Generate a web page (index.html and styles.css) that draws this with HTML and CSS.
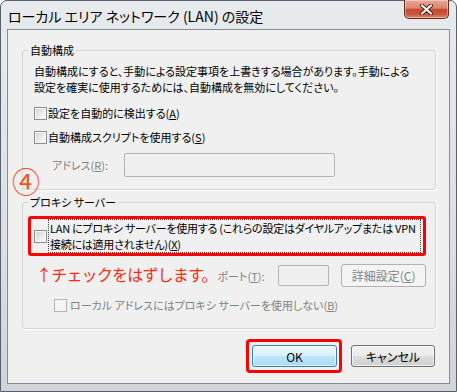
FILE: index.html
```html
<!DOCTYPE html>
<html>
    <head>
        <title>ローカル エリア ネットワーク (LAN) の設定</title>
        <link rel="stylesheet" href="styles.css">
    </head>
<body>
    <div class="window">
        <div class="titlebar">
            <span class="title">ローカル エリア ネットワーク (LAN) の設定</span>
            <span class="close-btn">
                <svg width="13" height="11" viewBox="0 0 13 11">
                    <path d="M2 1.5 L11 9.5 M11 1.5 L2 9.5" stroke="#4a1a12" stroke-width="4" stroke-linecap="round"/>
                    <path d="M2 1.5 L11 9.5 M11 1.5 L2 9.5" stroke="#fff" stroke-width="2.2" stroke-linecap="round"/>
                </svg>
            </span>
        </div>

        <div class="client">
            <span class="note-num">④</span>

            <fieldset class="group group-auto">
                <legend>自動構成</legend>
                <p class="desc">自動構成にすると、手動による設定事項を上書きする場合があります。手動による<br>設定を確実に使用するためには、自動構成を無効にしてください。</p>
                <div class="check check-first"><span class="box"></span>設定を自動的に検出する(<u>A</u>)</div>
                <div class="check"><span class="box"></span>自動構成スクリプトを使用する(<u>S</u>)</div>
                <div class="field-row">
                    <span class="field-label script-label">アドレス(<u>R</u>):</span>
                    <span class="textbox script-box"></span>
                </div>
            </fieldset>

            <fieldset class="group group-proxy">
                <legend>プロキシ サーバー</legend>
                <div class="mark-box">
                    <span class="box"></span>
                    <span class="focus-label">LAN にプロキシ サーバーを使用する (これらの設定はダイヤルアップまたは VPN<br>接続には適用されません)(<u>X</u>)</span>
                </div>
                <div class="proxy-row">
                    <span class="field-label addr-label">アドレス(<u>E</u>):</span>
                    <span class="textbox addr-box"></span>
                    <span class="field-label port-label">ポート(<u>T</u>):</span>
                    <span class="textbox port-box"></span>
                    <span class="btn btn-disabled">詳細設定(<u>C</u>)</span>
                </div>
                <div class="check check-local"><span class="box box-disabled"></span>ローカル アドレスにはプロキシ サーバーを使用しない(<u>B</u>)</div>
            </fieldset>

            <span class="note-text">↑チェックをはずします。</span>

            <div class="buttons">
                <span class="mark-btn"><span class="btn btn-default">OK</span></span>
                <span class="btn btn-cancel">キャンセル</span>
            </div>
        </div>
    </div>
</body>
</html>
```

FILE: styles.css
```css
* {
    box-sizing: border-box;
}

body {
    margin: 0;
    font-family: "Noto Sans CJK JP", sans-serif;
    font-size: 11px;
    font-feature-settings: "palt";
    color: #000;
}

.window {
    width: 457px;
    height: 392px;
    border: 1px solid #59626c;
    border-radius: 7px 7px 0 0;
    background: linear-gradient(180deg, #e8ebee 0%, #dcdfe3 60%, #d0d4d9 100%);
    padding: 0 6px 7px 6px;
    display: flex;
    flex-direction: column;
}

.titlebar {
    height: 28px;
    display: flex;
    justify-content: space-between;
    align-items: flex-start;
}

.title {
    font-size: 14px;
    line-height: 16px;
    margin-top: 7px;
    padding-left: 1px;
}

.close-btn {
    width: 45px;
    height: 19px;
    margin: -1px 1px 0 0;
    border: 1px solid #6b2b1f;
    border-top: none;
    border-radius: 0 0 5px 5px;
    background: linear-gradient(180deg, #eaa898 0%, #dc8671 45%, #c54a31 52%, #c9553a 78%, #de8c6c 100%);
    box-shadow: inset 0 0 0 1px rgba(255, 255, 255, 0.35);
    display: flex;
    align-items: center;
    justify-content: center;
}

.client {
    flex: 1;
    position: relative;
    background-color: #f0f0f0;
    border: 1px solid #848c95;
}

.group {
    margin: 0 13px 0 14px;
    border: 1px solid #d5d5d5;
    border-radius: 3px;
    box-shadow: 1px 1px 0 #fff;
    min-width: 0;
}

.group legend {
    padding: 0 2px;
    line-height: 16px;
}

.group-auto {
    margin-top: 12px;
    padding: 5px 10px 12px 11px;
}

.group-auto legend {
    margin-left: -6px;
}

.desc {
    margin: 0;
    line-height: 16px;
    white-space: nowrap;
}

.check {
    display: flex;
    align-items: center;
    height: 16px;
    margin-top: 8px;
    white-space: nowrap;
}

.check-first {
    margin-top: 10px;
}

.box {
    width: 13px;
    height: 13px;
    flex: none;
    margin-right: 1px;
    border: 1px solid #8e8f8f;
    background: linear-gradient(135deg, #cfd2d6 0%, #eeeeee 60%, #fbfbfb 100%);
    box-shadow: inset 0 0 0 1px #f6f6f6;
}

.box-disabled {
    border-color: #b4b4b4;
    background: #f4f4f4;
    box-shadow: none;
}

.field-row {
    display: flex;
    align-items: center;
    height: 24px;
    margin-top: 8px;
}

.field-label {
    color: #838383;
    white-space: nowrap;
}

.script-label {
    margin-left: 18px;
    width: 72px;
}

.textbox {
    display: block;
    height: 100%;
    border: 1px solid #b5b5b5;
    border-radius: 2px;
    background-color: #f0f0f0;
}

.script-box {
    width: 211px;
}

.group-proxy {
    margin-top: 4px;
    padding: 6px 9px 15px 5px;
}

.mark-box {
    width: 398px;
    display: flex;
    align-items: center;
    padding-left: 3px;
    border: 3px solid #ff0000;
    border-radius: 3px;
}

.focus-label {
    flex: 1;
    margin-right: 2px;
    border: 1px dotted #444;
    line-height: 16px;
    padding-left: 1px;
    letter-spacing: -0.25px;
    white-space: nowrap;
}

.proxy-row {
    display: flex;
    align-items: center;
    height: 23px;
    margin-top: 8px;
}

.addr-label {
    margin-left: 24px;
    width: 66px;
}

.addr-box {
    width: 95px;
    height: 21px;
}

.port-label {
    margin-left: 5px;
    width: 61px;
}

.port-box {
    width: 51px;
    height: 21px;
}

.check-local {
    margin-top: 10px;
    margin-left: 26px;
    color: #838383;
}

.check-local .box {
    margin-right: 3px;
}

.btn {
    display: flex;
    align-items: center;
    justify-content: center;
    height: 22px;
    border: 1px solid #707070;
    border-radius: 3px;
    background: linear-gradient(180deg, #f2f2f2 0%, #ebebeb 48%, #dddddd 52%, #cfcfcf 100%);
    box-shadow: inset 0 0 0 1px rgba(255, 255, 255, 0.7);
    white-space: nowrap;
    font-size: 12px;
}

.btn-disabled {
    width: 85px;
    height: 23px;
    margin-left: 12px;
    color: #838383;
    border-color: #adb2b5;
    background: #f4f4f4;
    box-shadow: none;
}

.buttons {
    display: flex;
    justify-content: flex-end;
    align-items: center;
    margin: 10px 14px 0 0;
}

.mark-btn {
    display: flex;
    padding: 3px 2px 3px 3px;
    border: 3px solid #ff0000;
    border-radius: 4px;
}

.btn-default {
    width: 85px;
    border-color: #3c7fb1;
    background: linear-gradient(180deg, #eaf6fd 0%, #d9f0fc 48%, #bee6fd 52%, #a7d9f5 100%);
}

.btn-cancel {
    width: 84px;
    margin-left: 9px;
}

.note-num {
    position: absolute;
    left: 4px;
    top: 137px;
    font-size: 28px;
    line-height: 28px;
    color: #f4501c;
    font-feature-settings: normal;
}

.note-text {
    position: absolute;
    left: 26px;
    top: 235px;
    padding: 0 0 3px 2px;
    font-size: 16px;
    line-height: 18px;
    letter-spacing: -0.8px;
    color: #ff2a10;
    background-color: #f0f0f0;
    font-feature-settings: normal;
}
```
